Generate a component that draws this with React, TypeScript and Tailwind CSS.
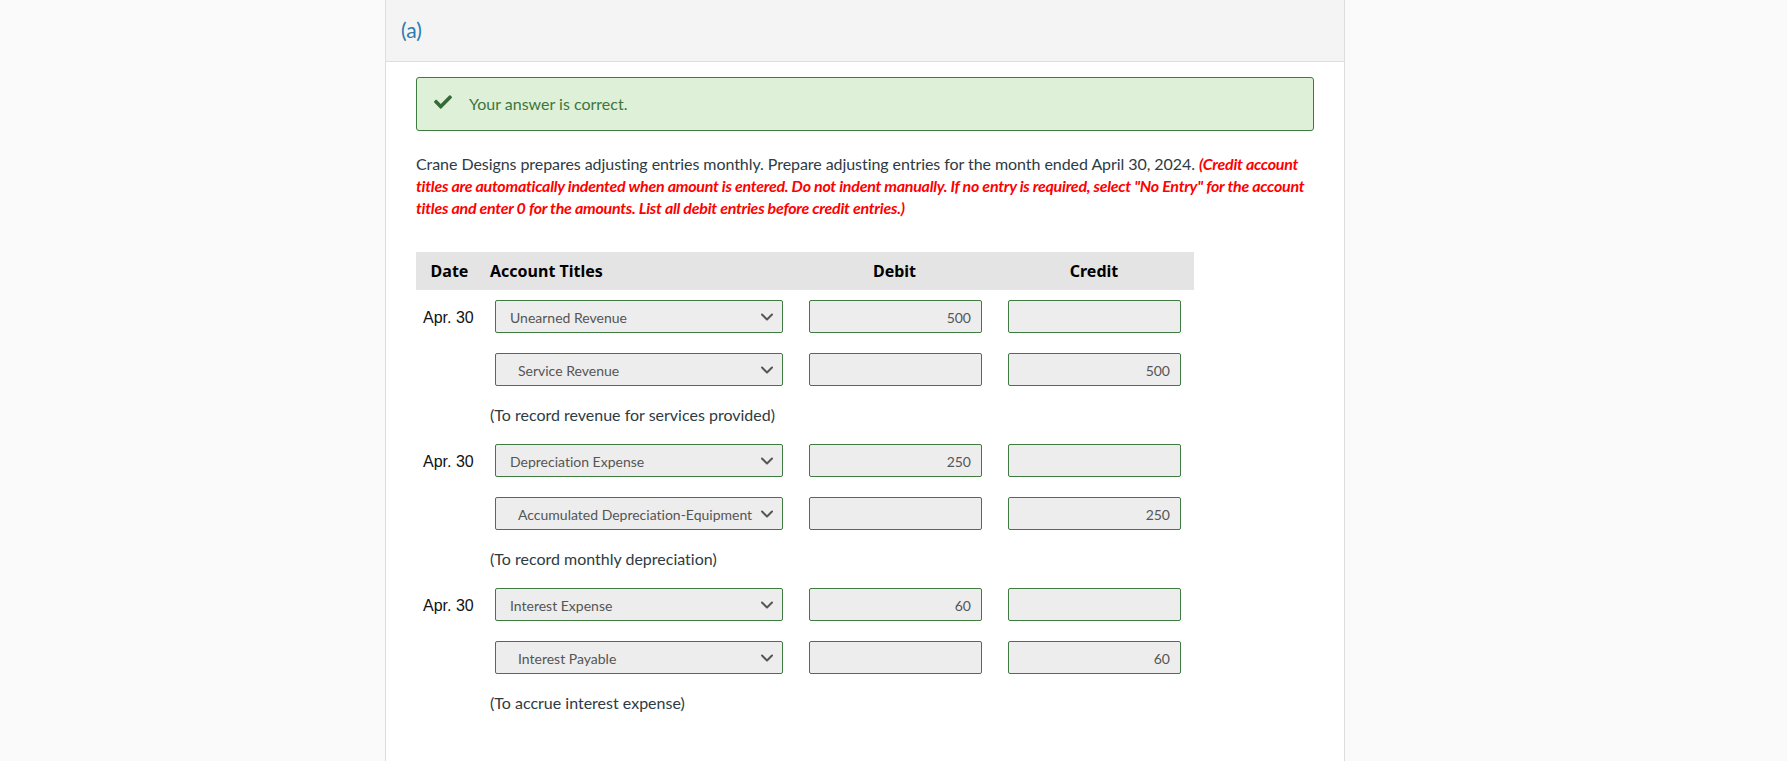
import { ChevronDown } from "lucide-react";
import { FaCheck } from "react-icons/fa";

interface Line {
  account: string;
  debit?: string;
  credit?: string;
  indent?: boolean;
}

interface Entry {
  note: string;
  lines: Line[];
}

const entries: Entry[] = [
  {
    note: "(To record revenue for services provided)",
    lines: [
      { account: "Unearned Revenue", debit: "500" },
      { account: "Service Revenue", credit: "500", indent: true },
    ],
  },
  {
    note: "(To record monthly depreciation)",
    lines: [
      { account: "Depreciation Expense", debit: "250" },
      { account: "Accumulated Depreciation-Equipment", credit: "250", indent: true },
    ],
  },
  {
    note: "(To accrue interest expense)",
    lines: [
      { account: "Interest Expense", debit: "60" },
      { account: "Interest Payable", credit: "60", indent: true },
    ],
  },
];

function AmountBox({ value }: { value?: string }) {
  return (
    <div className="h-[33px] w-[173px] rounded-[2px] border border-[#3f7a41] bg-[#ededed] px-[10px] text-right text-[14px] leading-[33px] text-[#555555]">
      {value}
    </div>
  );
}

function EntryLine({ line, date }: { line: Line; date?: string }) {
  return (
    <div className="flex items-center">
      <div className="w-[79px] pl-[7px] pt-[3px] font-['Liberation_Sans',sans-serif] text-[16px] text-[#111111]">
        {date}
      </div>
      <div
        className={`flex h-[33px] w-[288px] items-center justify-between rounded-[2px] border border-[#3f7a41] bg-[#ededed] pr-[5px] text-[14px] text-[#555555] ${
          line.indent ? "pl-[22px]" : "pl-[14px]"
        }`}
      >
        <span className="whitespace-nowrap pt-[2px]">{line.account}</span>
        <ChevronDown className="size-[20px] shrink-0" strokeWidth={2.4} />
      </div>
      <div className="ml-[26px]">
        <AmountBox value={line.debit} />
      </div>
      <div className="ml-[26px]">
        <AmountBox value={line.credit} />
      </div>
    </div>
  );
}

export default function App() {
  return (
    <div className="h-[761px] overflow-hidden bg-[#fafafa] font-['Lato',sans-serif] [font-variant-ligatures:none]">
      <div className="relative z-10 h-0 shadow-[0_0_7px_rgba(0,0,0,0.4)]" />
      <div className="ml-[385px] h-[761px] w-[960px] border-x border-[#dddddd] bg-white">
        <div className="flex h-[62px] items-center border-b border-[#dddddd] bg-[#f4f4f4] pb-[2px] pl-[15px] text-[21px] text-[#2b7bb0]">
          (a)
        </div>

        <div className="px-[30px] pt-[15px]">
          <div className="flex h-[54px] w-[898px] items-center rounded-[3px] border border-[#3f7a41] bg-[#dff0d8] pl-[17px] text-[16px] text-[#3c763d]">
            <FaCheck className="mb-[4px] size-[18px] text-[#356b37]" />
            <span className="ml-[17px]">Your answer is correct.</span>
          </div>

          <p className="mt-[22px] w-[899px] text-[16px] leading-[22px] tracking-[-0.06px] text-[#2d3b45]">
            Crane Designs prepares adjusting entries monthly. Prepare adjusting entries for the month ended April 30,
            2024.{" "}
            <em className="font-bold italic tracking-[-0.26px] text-[#ff0000]">
              (Credit account titles are automatically indented when amount is entered. Do not indent manually. If no
              entry is required, select "No Entry" for the account titles and enter 0 for the amounts. List all debit
              entries before credit entries.)
            </em>
          </p>

          <div className="mt-[33px] w-[778px]">
            <div className="flex h-[38px] items-center bg-[#e4e4e4] font-['Noto_Sans',sans-serif] text-[16px] font-bold text-black">
              <div className="w-[74px] pr-[7px] text-center">Date</div>
              <div className="flex-1">Account Titles</div>
              <div className="w-[199px] text-center">Debit</div>
              <div className="w-[200px] text-center">Credit</div>
            </div>

            <div className="mt-[10px] flex flex-col gap-[18px]">
              {entries.map((entry) => (
                <div key={entry.note} className="flex flex-col">
                  <EntryLine line={entry.lines[0]} date="Apr. 30" />
                  <div className="mt-[20px]">
                    <EntryLine line={entry.lines[1]} />
                  </div>
                  <div className="mt-[18px] h-[22px] pl-[74px] text-[16px] leading-[22px] text-[#2d3b45]">
                    {entry.note}
                  </div>
                </div>
              ))}
            </div>
          </div>
        </div>
      </div>
    </div>
  );
}
